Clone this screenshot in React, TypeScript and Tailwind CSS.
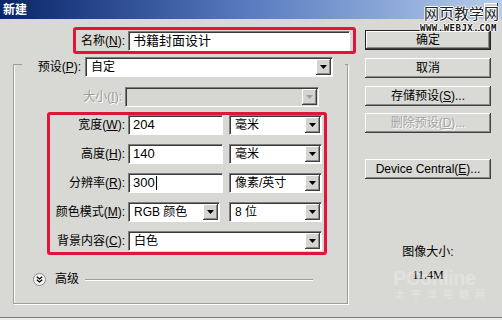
import React from "react";

const F = "font-['Liberation_Sans','Noto_Sans_CJK_SC',sans-serif]";

function Label({ text, k, w, disabled }: { text: string; k: string; w: string; disabled?: boolean }) {
  return (
    <div className={`${w} shrink-0 text-right pr-[3px] text-[12px] leading-[14px] ${disabled ? "text-[#9a9a9a] [text-shadow:1px_1px_0_#fff]" : "text-black"}`}>
      {text}(<span className="underline underline-offset-1">{k}</span>):
    </div>
  );
}

function Input({ value, w, cursor }: { value: string; w: string; cursor?: boolean }) {
  return (
    <div className={`${w} h-5 shrink-0 bg-white border border-t-[#7c7c7c] border-l-[#7c7c7c] border-b-white border-r-white shadow-[inset_1px_1px_0_#3a3a3a] flex items-center pl-[4px] text-[13px] text-black`}>
      {value}
      {cursor && <span className="inline-block w-px h-[14px] bg-black ml-px" />}
    </div>
  );
}

function Arrow({ disabled }: { disabled?: boolean }) {
  return (
    <div className="w-[15px] h-[16px] mr-px shrink-0 bg-[#d4d4d0] shadow-[inset_-1px_-1px_0_#404040,inset_1px_1px_0_#fff,inset_-2px_-2px_0_#8a8a8a] flex items-center justify-center">
      <svg width="7" height="4" viewBox="0 0 7 4">
        <path d="M0 0H7L3.5 4Z" fill={disabled ? "#a0a0a0" : "#000"} />
      </svg>
    </div>
  );
}

function Select({ value, w, disabled }: { value: string; w: string; disabled?: boolean }) {
  return (
    <div className={`${w} h-5 shrink-0 ${disabled ? "bg-[#d6d6d2]" : "bg-white"} border border-t-[#7c7c7c] border-l-[#7c7c7c] border-b-white border-r-white shadow-[inset_1px_1px_0_#3a3a3a] flex items-center justify-between pl-[5px] text-[12px] text-black`}>
      <span className="leading-[14px]">{value}</span>
      <Arrow disabled={disabled} />
    </div>
  );
}

function Btn({ children, def, disabled }: { children: React.ReactNode; def?: boolean; disabled?: boolean }) {
  return (
    <div className={`w-[126px] h-5 flex items-center justify-center text-[12px] leading-[14px] bg-[#d9d9d5] ${def ? "border border-[#222]" : ""} shadow-[inset_-1px_-1px_0_#404040,inset_1px_1px_0_#fff,inset_-2px_-2px_0_#8a8a8a] ${disabled ? "text-[#a2a2a2] [text-shadow:1px_1px_0_#fff]" : "text-black"}`}>
      {children}
    </div>
  );
}

export default function App() {
  return (
    <div className={`${F} relative w-[502px] h-[320px] overflow-hidden bg-[#ececec]`}>
      <div className="w-[502px] h-[318px] bg-[#d8d8d4] border-b border-[#7a7a7a] flex flex-col">
        {/* title bar */}
        <div className="h-[19px] shrink-0 flex items-center justify-between bg-gradient-to-r from-[#0a246a] via-[#5a7cc0] to-[#b6cdea]">
          <span className="pl-[3px] text-[12px] font-bold text-white leading-[14px]">新建</span>
          <div className="mr-[4px] w-[14px] h-[13px] bg-[#d4d0c8] shadow-[inset_-1px_-1px_0_#404040,inset_1px_1px_0_#fff] flex items-center justify-center">
            <svg width="8" height="7" viewBox="0 0 8 7">
              <path d="M0.5 0.5L7.5 6.5M7.5 0.5L0.5 6.5" stroke="#000" strokeWidth="1.6" />
            </svg>
          </div>
        </div>
        {/* body */}
        <div className="flex flex-1">
          {/* left */}
          <div className="w-[356px] shrink-0 flex flex-col">
            <div className="ml-[73px] mt-[8px] w-[283px] h-[27px] border-[3px] border-[#e0153a] rounded-[3px] flex items-center">
              <Label text="名称" k="N" w="w-[52px]" />
              <Input value="书籍封面设计" w="w-[222px]" />
            </div>
            {/* fieldset */}
            <div className="ml-[13px] mt-[10px] w-[335px] h-[240px] border-l border-r border-b border-[#9c9c9c] shadow-[inset_1px_0_0_#fff,1px_1px_0_#fff] flex flex-col">
              <div className="-mt-[7px] flex items-start h-5">
                <div className="w-[8px] mt-[7px] border-t border-[#9c9c9c]" />
                <div className="flex-1 flex items-center h-5 bg-[#d8d8d4]">
                  <Label text="预设" k="P" w="w-[62px]" />
                  <div className="w-px" />
                  <Select value="自定" w="w-[248px]" />
                </div>
                <div className="w-[2px] mt-[7px] border-t border-[#9c9c9c]" />
              </div>
              <div className="mt-[10px] flex items-center h-5">
                <Label text="大小" k="I" w="w-[111px]" disabled />
                <Select value="" w="w-[194px]" disabled />
              </div>
              <div className="ml-[33px] mt-[5px] w-[280px] h-[143px] border-[3px] border-[#e0153a] rounded-[3px] flex flex-col gap-[9px] pb-[1px]">
                <div className="flex items-center h-5">
                  <Label text="宽度" k="W" w="w-[78px]" />
                  <Input value="204" w="w-[95px]" />
                  <div className="w-[6px]" />
                  <Select value="毫米" w="w-[93px]" />
                </div>
                <div className="flex items-center h-5">
                  <Label text="高度" k="H" w="w-[78px]" />
                  <Input value="140" w="w-[95px]" />
                  <div className="w-[6px]" />
                  <Select value="毫米" w="w-[93px]" />
                </div>
                <div className="flex items-center h-5">
                  <Label text="分辨率" k="R" w="w-[78px]" />
                  <Input value="300" w="w-[95px]" cursor />
                  <div className="w-[6px]" />
                  <Select value="像素/英寸" w="w-[93px]" />
                </div>
                <div className="flex items-center h-5">
                  <Label text="颜色模式" k="M" w="w-[78px]" />
                  <Select value="RGB 颜色" w="w-[92px]" />
                  <div className="w-[9px]" />
                  <Select value="8 位" w="w-[93px]" />
                </div>
                <div className="flex items-center h-5">
                  <Label text="背景内容" k="C" w="w-[78px]" />
                  <Select value="白色" w="w-[194px]" />
                </div>
              </div>
              <div className="mt-[17px] ml-[19px] h-[14px] flex items-center">
                <div className="w-[13px] h-[13px] rounded-full bg-[#f4f4f2] border border-[#8a8a8a] flex items-center justify-center">
                  <svg width="7" height="7" viewBox="0 0 7 7">
                    <path d="M0.8 0.8L3.5 3L6.2 0.8M0.8 3.8L3.5 6L6.2 3.8" stroke="#000" strokeWidth="1.3" fill="none" />
                  </svg>
                </div>
                <span className="ml-[9px] text-[12px] leading-[14px] text-black">高级</span>
                <div className="ml-[6px] w-[228px] border-t border-[#9c9c9c] shadow-[0_1px_0_#fff]" />
              </div>
            </div>
          </div>
          {/* right */}
          <div className="ml-[9px] w-[126px] flex flex-col">
            <div className="mt-[11px]"><Btn def>确定</Btn></div>
            <div className="mt-[8px]"><Btn>取消</Btn></div>
            <div className="mt-[8px]"><Btn>存储预设(<span className="underline">S</span>)...</Btn></div>
            <div className="mt-[7px]"><Btn disabled>删除预设(<span className="underline">D</span>)...</Btn></div>
            <div className="mt-[26px]"><Btn>Device Central(<span className="underline">E</span>)...</Btn></div>
            <div className="mt-[66px] text-center text-[12px] leading-[14px] text-black">图像大小:</div>
            <div className="mt-[9px] text-center text-[12px] leading-[14px] text-black font-['Liberation_Serif',serif]">11.4M</div>
          </div>
        </div>
      </div>
      {/* watermarks */}
      <div className="absolute left-[424px] top-[5px] text-[15px] leading-[17px] text-[#222] [text-shadow:1px_0_0_#fff,-1px_0_0_#fff,0_1px_0_#fff,0_-1px_0_#fff]">网页教学网</div>
      <div className="absolute left-[420px] top-[23px] text-[9px] leading-[10px] font-bold tracking-[0.5px] text-[#111] [text-shadow:1px_0_0_#fff,-1px_0_0_#fff,0_1px_0_#fff,0_-1px_0_#fff] font-['DejaVu_Sans_Mono',monospace]">WWW.WEBJX.COM</div>
      <div className="absolute left-[393px] top-[268px] text-[20px] leading-[20px] font-bold text-white/25 tracking-[-0.5px] pointer-events-none">PConline</div>
      <div className="absolute left-[395px] top-[290px] text-[10px] leading-[10px] text-white/35 tracking-[6px] pointer-events-none">太平洋电脑网</div>
    </div>
  );
}
